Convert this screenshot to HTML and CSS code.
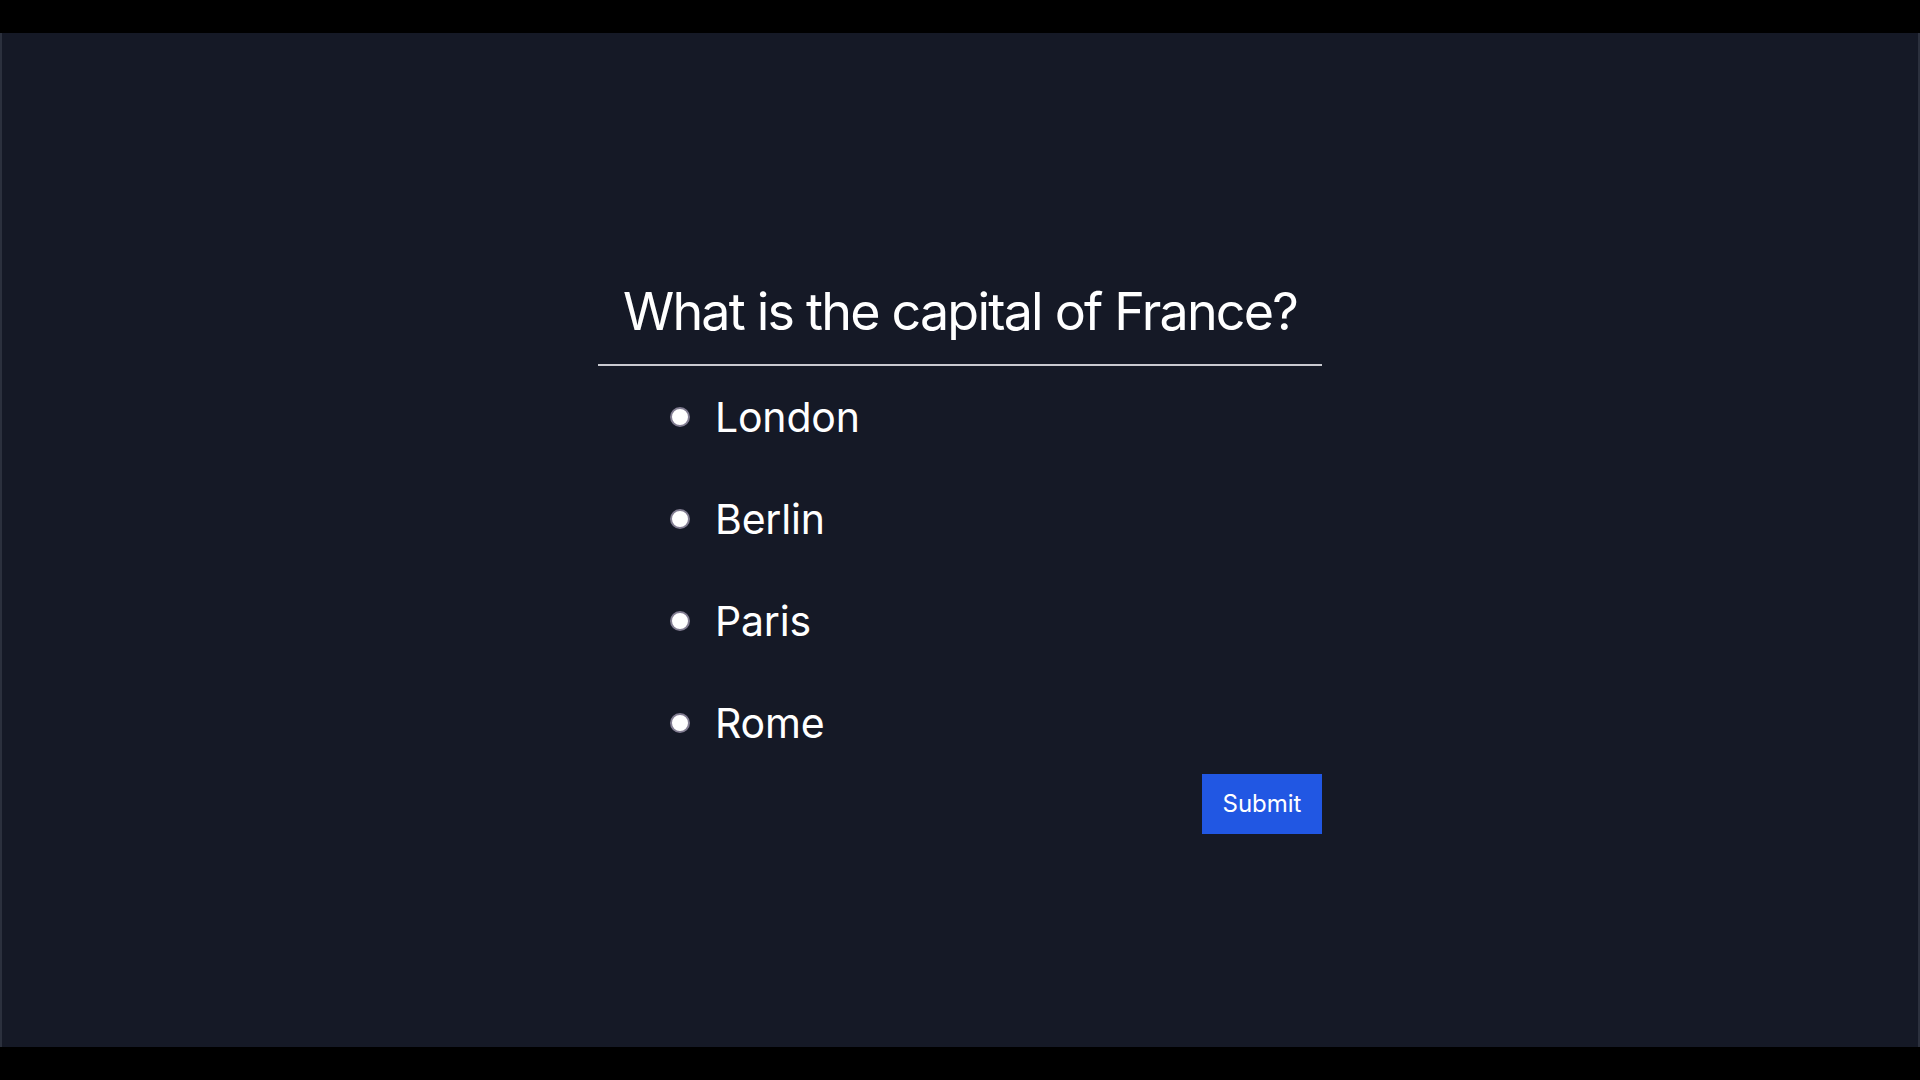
FILE: index.html
```html
<!DOCTYPE html>
<html lang="en">
<head>
<meta charset="utf-8">
<title>Quiz</title>
<link rel="stylesheet" href="styles.css">
</head>
<body>
<div class="screen">
  <form class="quiz">
    <h1 class="question">What is the capital of France?</h1>
    <ul class="options">
      <li class="option"><label><input type="radio" name="answer" class="radio"><span>London</span></label></li>
      <li class="option"><label><input type="radio" name="answer" class="radio"><span>Berlin</span></label></li>
      <li class="option"><label><input type="radio" name="answer" class="radio"><span>Paris</span></label></li>
      <li class="option"><label><input type="radio" name="answer" class="radio"><span>Rome</span></label></li>
    </ul>
    <div class="actions">
      <button type="button" class="submit">Submit</button>
    </div>
  </form>
</div>
</body>
</html>
```

FILE: styles.css
```css
html, body {
  margin: 0;
  padding: 0;
  background: #000;
  height: 100%;
}
body {
  font-family: Inter, "Noto Sans", "Liberation Sans", sans-serif;
  color: #fff;
}
.screen {
  margin-top: 33px;
  height: 1014px;
  box-sizing: border-box;
  background: #151926;
  border-left: 2px solid #2b303d;
  border-right: 2px solid #2b303d;
  display: flex;
  justify-content: center;
  align-items: flex-start;
  padding-top: 247px;
}
.quiz {
  width: 724px;
}
.question {
  margin: 0;
  font-size: 52px;
  line-height: 64px;
  font-weight: 400;
  letter-spacing: -1.8px;
  white-space: nowrap;
  text-align: center;
  padding-bottom: 20px;
  border-bottom: 2px solid #c9cad0;
}
.options {
  list-style: none;
  margin: 21px 0 0;
  padding: 0 0 0 72px;
  display: flex;
  flex-direction: column;
  gap: 42px;
}
.option label {
  display: flex;
  align-items: center;
  gap: 25px;
  height: 60px;
  font-size: 41px;
  line-height: 60px;
  letter-spacing: -0.2px;
}
.radio {
  appearance: none;
  -webkit-appearance: none;
  margin: 0;
  width: 20px;
  height: 20px;
  border-radius: 50%;
  background: #fff;
  border: 2px solid #827d92;
  box-sizing: border-box;
  flex: none;
}
.actions {
  display: flex;
  justify-content: flex-end;
  margin-top: 21px;
}
.submit {
  font-family: inherit;
  font-size: 24px;
  line-height: 36px;
  color: #fff;
  background: #2157e3;
  border: none;
  border-radius: 0;
  padding: 12px 20px;
  width: 120px;
}
```
